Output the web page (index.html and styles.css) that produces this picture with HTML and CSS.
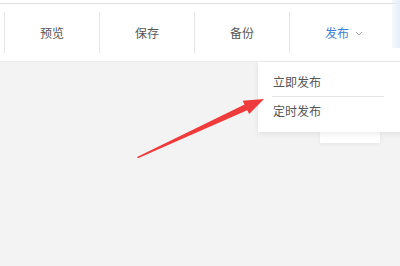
FILE: index.html
```html
<!DOCTYPE html>
<html lang="zh-CN">
<head>
    <meta charset="UTF-8">
    <title>发布</title>
    <link rel="stylesheet" href="styles.css">
</head>
<body>
    <div class="page">
        <div class="top-strip"></div>

        <!-- 工具栏 -->
        <div class="toolbar">
            <div class="tool-item">预览</div>
            <div class="tool-item">保存</div>
            <div class="tool-item">备份</div>
            <div class="tool-item publish">
                发布
                <svg class="chevron" width="8" height="5" viewBox="0 0 8 5">
                    <path d="M1 1 L4 4 L7 1" fill="none" stroke="#b8b8b8" stroke-width="1"/>
                </svg>
            </div>
        </div>

        <div class="content"></div>

        <!-- 发布下拉菜单 -->
        <div class="back-panel"></div>
        <div class="dropdown">
            <div class="menu-item">立即发布</div>
            <div class="menu-sep"></div>
            <div class="menu-item">定时发布</div>
        </div>

        <div class="edge-glow"></div>

        <svg class="pointer" width="400" height="266" viewBox="0 0 400 266">
            <polygon points="137,157 244.6,104.6 242.6,100.8 264,99 249.2,114 247.2,110.2 138,158.2" fill="#ef3b3b"/>
        </svg>
    </div>
</body>
</html>
```

FILE: styles.css
```css
* {
    margin: 0;
    padding: 0;
    box-sizing: border-box;
}

body {
    width: 400px;
    height: 266px;
    overflow: hidden;
    background: #f3f3f3;
    font-family: "Noto Sans CJK SC", "Liberation Sans", sans-serif;
    font-size: 12px;
    color: #555;
}

.page {
    position: relative;
    height: 100%;
    display: flex;
    flex-direction: column;
}

.top-strip {
    height: 4px;
    background: #fff;
    border-bottom: 1px solid #e2e2e2;
}

/* ---------------- 工具栏 ---------------- */

.toolbar {
    height: 58px;
    background: #fff;
    border-bottom: 1px solid #ebebeb;
    display: flex;
    align-items: center;
    padding-left: 4px;
}

.tool-item {
    width: 95px;
    height: 41px;
    border-left: 1px solid #e6e6e6;
    display: flex;
    align-items: center;
    justify-content: center;
    gap: 6px;
}

.tool-item.publish {
    color: #3d7fd4;
    padding-left: 2px;
    justify-content: flex-start;
    padding-left: 35px;
}

.chevron {
    margin-top: 1px;
}

.content {
    flex: 1;
}

/* ---------------- 下拉菜单 ---------------- */

.dropdown {
    position: absolute;
    left: 258px;
    top: 62px;
    width: 150px;
    padding: 6px 0 7px;
    background: #fff;
    box-shadow: 0 2px 6px rgba(0, 0, 0, 0.08);
}

.menu-item {
    height: 28px;
    line-height: 28px;
    padding-left: 15px;
    color: #555;
}

.menu-sep {
    height: 1px;
    width: 112px;
    margin-left: 14px;
    background: #e6e6e6;
}

.back-panel {
    position: absolute;
    left: 320px;
    top: 128px;
    width: 60px;
    height: 15px;
    background: #fff;
    box-shadow: 0 1px 4px rgba(0, 0, 0, 0.06);
}

.edge-glow {
    position: absolute;
    right: 0;
    top: 0;
    width: 8px;
    height: 48px;
    background: linear-gradient(to right, rgba(225, 236, 248, 0.3), #e4eef9);
}

.pointer {
    position: absolute;
    left: 0;
    top: 0;
}
```
